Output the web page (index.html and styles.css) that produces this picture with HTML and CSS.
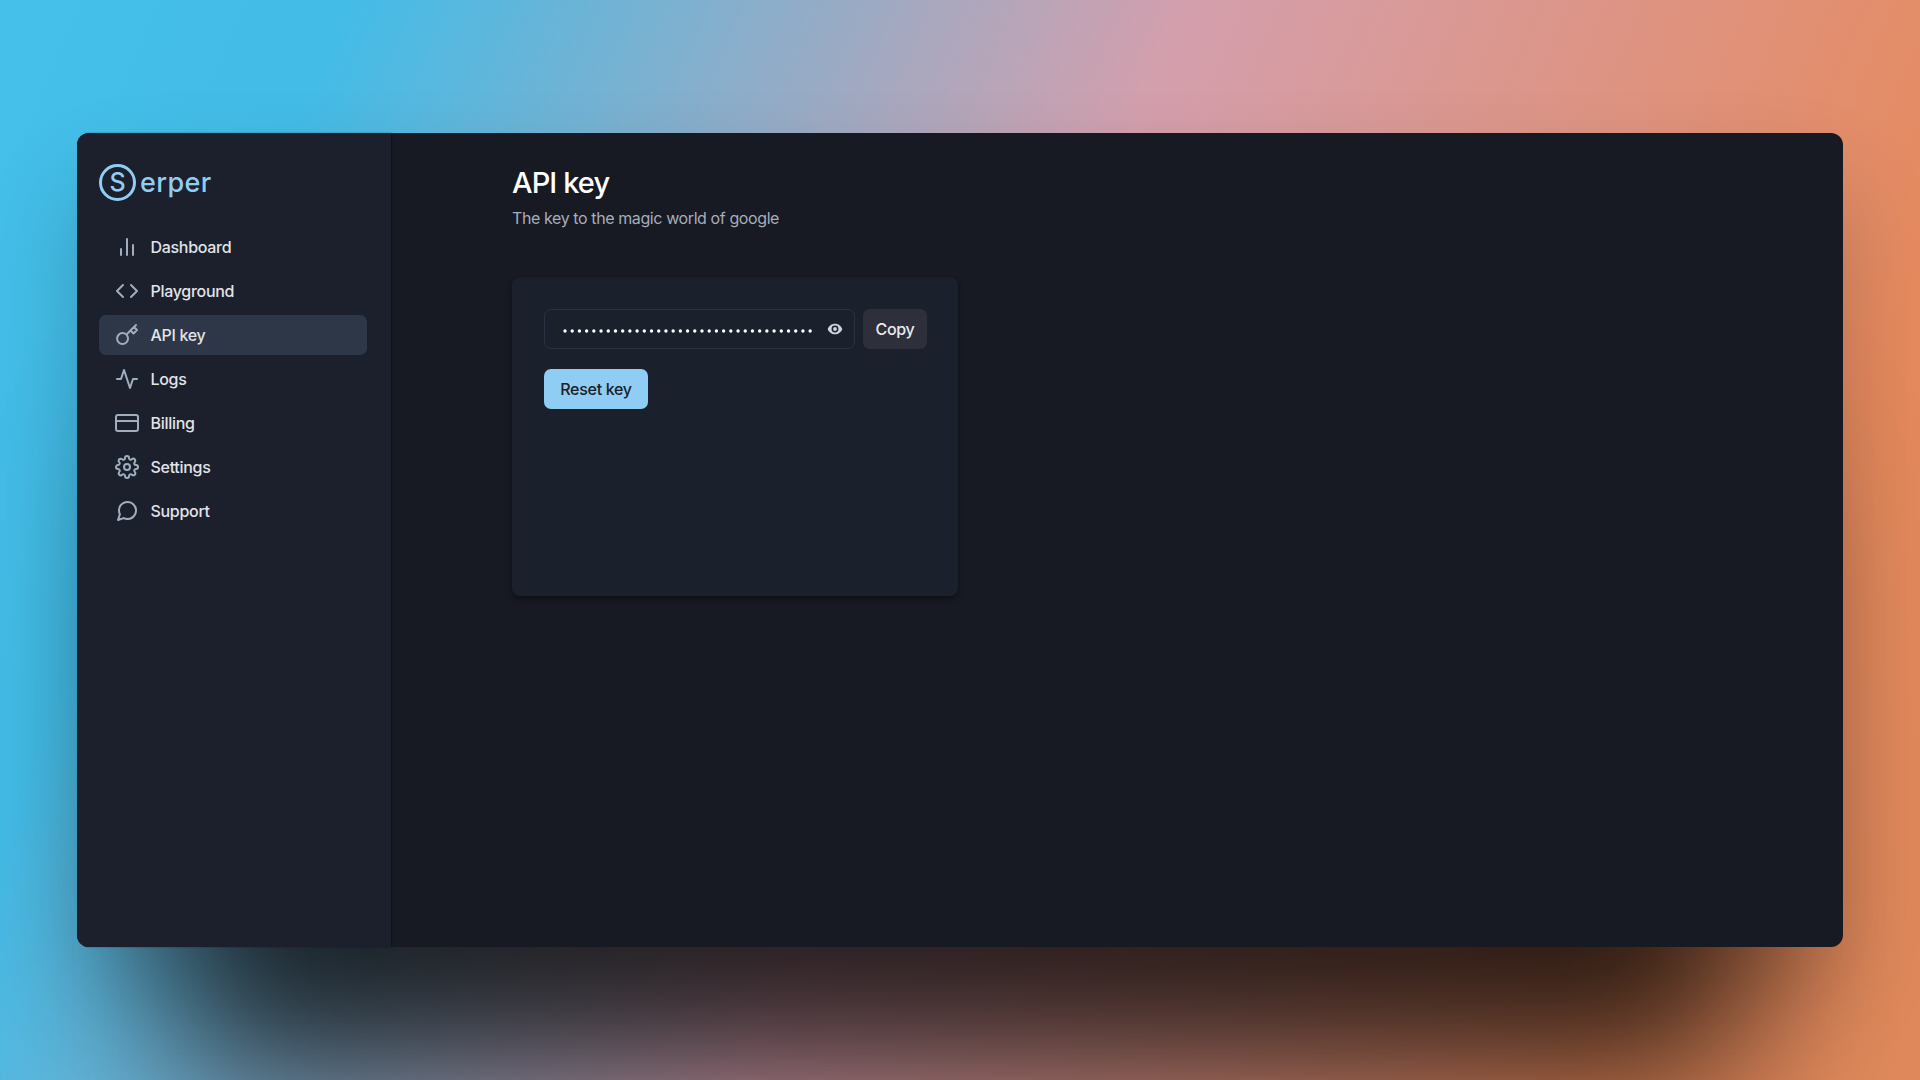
FILE: index.html
```html
<!DOCTYPE html>
<html lang="en">
<head>
<meta charset="utf-8">
<title>API key – Serper</title>
<link rel="stylesheet" href="styles.css">
</head>
<body>
<div class="window">
  <aside class="sidebar">
    <div class="logo">
      <span class="logo-mark">S</span><span class="logo-text">erper</span>
    </div>
    <nav class="nav">
      <a class="nav-item"><svg class="icon" viewBox="0 0 24 24"><path d="M18 20V10M12 20V4M6 20v-6"/></svg>Dashboard</a>
      <a class="nav-item"><svg class="icon" viewBox="0 0 24 24"><path d="M16 18l6-6-6-6M8 6l-6 6 6 6"/></svg>Playground</a>
      <a class="nav-item active"><svg class="icon" viewBox="0 0 24 24"><path d="M21 2l-2 2m-7.61 7.61a5.5 5.5 0 1 1-7.778 7.778 5.5 5.5 0 0 1 7.777-7.777zm0 0L15.5 7.5m0 0l3 3L22 7l-3-3m-3.5 3.5L19 4"/></svg>API key</a>
      <a class="nav-item"><svg class="icon" viewBox="0 0 24 24"><path d="M22 12h-4l-3 9L9 3l-3 9H2"/></svg>Logs</a>
      <a class="nav-item"><svg class="icon" viewBox="0 0 24 24"><rect x="1" y="4" width="22" height="16" rx="2"/><path d="M1 10h22"/></svg>Billing</a>
      <a class="nav-item"><svg class="icon" viewBox="0 0 24 24"><circle cx="12" cy="12" r="3"/><path d="M19.4 15a1.65 1.65 0 0 0 .33 1.82l.06.06a2 2 0 0 1 0 2.83 2 2 0 0 1-2.83 0l-.06-.06a1.65 1.65 0 0 0-1.82-.33 1.65 1.65 0 0 0-1 1.51V21a2 2 0 0 1-2 2 2 2 0 0 1-2-2v-.09A1.65 1.65 0 0 0 9 19.4a1.65 1.65 0 0 0-1.82.33l-.06.06a2 2 0 0 1-2.83 0 2 2 0 0 1 0-2.83l.06-.06a1.65 1.65 0 0 0 .33-1.82 1.65 1.65 0 0 0-1.51-1H3a2 2 0 0 1-2-2 2 2 0 0 1 2-2h.09A1.65 1.65 0 0 0 4.6 9a1.65 1.65 0 0 0-.33-1.82l-.06-.06a2 2 0 0 1 0-2.83 2 2 0 0 1 2.83 0l.06.06a1.65 1.65 0 0 0 1.82.33H9a1.65 1.65 0 0 0 1-1.51V3a2 2 0 0 1 2-2 2 2 0 0 1 2 2v.09a1.65 1.65 0 0 0 1 1.51 1.65 1.65 0 0 0 1.82-.33l.06-.06a2 2 0 0 1 2.83 0 2 2 0 0 1 0 2.83l-.06.06a1.65 1.65 0 0 0-.33 1.82V9a1.65 1.65 0 0 0 1.51 1H21a2 2 0 0 1 2 2 2 2 0 0 1-2 2h-.09a1.65 1.65 0 0 0-1.51 1z"/></svg>Settings</a>
      <a class="nav-item"><svg class="icon" viewBox="0 0 24 24"><path d="M21 11.5a8.38 8.38 0 0 1-.9 3.8 8.5 8.5 0 0 1-7.6 4.7 8.38 8.38 0 0 1-3.8-.9L3 21l1.9-5.7a8.38 8.38 0 0 1-.9-3.8 8.5 8.5 0 0 1 4.7-7.6 8.38 8.38 0 0 1 3.8-.9h.5a8.48 8.48 0 0 1 8 8v.5z"/></svg>Support</a>
    </nav>
  </aside>
  <main class="content">
    <h1 class="title">API key</h1>
    <p class="subtitle">The key to the magic world of google</p>
    <section class="card">
      <div class="key-row">
        <div class="key-field">
          <svg class="dots" viewBox="0 0 250 4"><path d="M2 2H249"/></svg>
          <svg class="eye" viewBox="0 0 24 24"><path d="M12 4C7 4 2.700 7.300 1 12c1.700 4.700 6 8 11 8s9.300-3.300 11-8c-1.700-4.700-6-8-11-8zm0 13.200a5.200 5.200 0 1 1 0-10.400 5.200 5.200 0 0 1 0 10.400z"/><circle cx="12" cy="12" r="2.900"/></svg>
        </div>
        <button class="btn btn-copy">Copy</button>
      </div>
      <button class="btn btn-reset">Reset key</button>
    </section>
  </main>
</div>
</body>
</html>
```
FILE: styles.css
```css
* { box-sizing: border-box; }
body {
  margin: 0;
  height: 1080px;
  overflow: hidden;
  padding: 133px 77px;
  font-family: Inter, "Liberation Sans", sans-serif;
  background: linear-gradient(112.6deg, #44c0ea 0%, #43bce7 14.8%, #d49fad 50.3%, #e68a5e 86%, #e08a5c 100%);
}
.window {
  display: flex;
  height: 814px;
  border-radius: 12px;
  background: #171a23;
  box-shadow: 0 235px 150px -100px rgba(0, 0, 0, .75), 0 50px 100px -10px rgba(0, 0, 0, .24);
}
.sidebar {
  width: 314px;
  padding: 30px 24px 30px 22px;
  border-radius: 12px 0 0 12px;
  background: #1b202c;
  box-shadow: 1px 0 2px rgba(0, 0, 0, .4);
}
.logo { display: flex; align-items: center; height: 38px; color: #90cdf4; }
.logo-mark {
  width: 37px;
  height: 37px;
  border: 3px solid #90cdf4;
  border-radius: 50%;
  font-size: 25px;
  font-weight: 500;
  line-height: 31px;
  text-align: center;
}
.logo-text { margin: 2px 0 0 4px; font-size: 27px; font-weight: 500; line-height: 36px; letter-spacing: .4px; }
.nav { display: grid; gap: 4px; margin-top: 26px; }
.nav-item {
  display: flex;
  align-items: center;
  gap: 12px;
  height: 40px;
  padding-left: 15.5px;
  border-radius: 7px;
  color: #e2e4e8;
  font-size: 16px;
  font-weight: 500;
  letter-spacing: -.3px;
}
.active { background: #2d3748; }
.icon { width: 24px; height: 24px; fill: none; stroke: #a0aec0; stroke-width: 2; stroke-linecap: round; stroke-linejoin: round; }
.content { padding: 32px 121px; }
.title { margin: 0; color: #fff; font-size: 29px; font-weight: 500; line-height: 36px; letter-spacing: -.9px; }
.subtitle { margin: 5px 0 0; color: #a6aebb; font-size: 16px; line-height: 24px; letter-spacing: -.4px; }
.card {
  width: 446px;
  height: 319px;
  margin-top: 47px;
  padding: 32px 31px 32px 32px;
  border-radius: 8px;
  background: #1b212c;
  box-shadow: 0 4px 6px -1px rgba(0, 0, 0, .3), 0 2px 4px -1px rgba(0, 0, 0, .25);
}
.key-row { display: flex; gap: 8px; }
.key-field {
  display: flex;
  align-items: center;
  justify-content: space-between;
  width: 311px;
  height: 40px;
  padding: 0 11px 0 18px;
  border: 1px solid #2b3142;
  border-radius: 7px;
}
.dots { width: 250px; height: 4px; margin-top: 3px; fill: none; stroke: #fff; stroke-width: 3.4; stroke-linecap: round; stroke-dasharray: 0 7.21; }
.eye { width: 16px; height: 16px; fill: #cbd5e0; }
.btn { height: 40px; padding: 0; border: 0; border-radius: 7px; font: 500 16px/40px Inter, sans-serif; letter-spacing: -.3px; }
.btn-copy { width: 64px; background: #2d303b; color: #ebebed; }
.btn-reset { display: block; width: 104px; margin-top: 20px; background: #90cdf4; color: #1a202c; }
```
